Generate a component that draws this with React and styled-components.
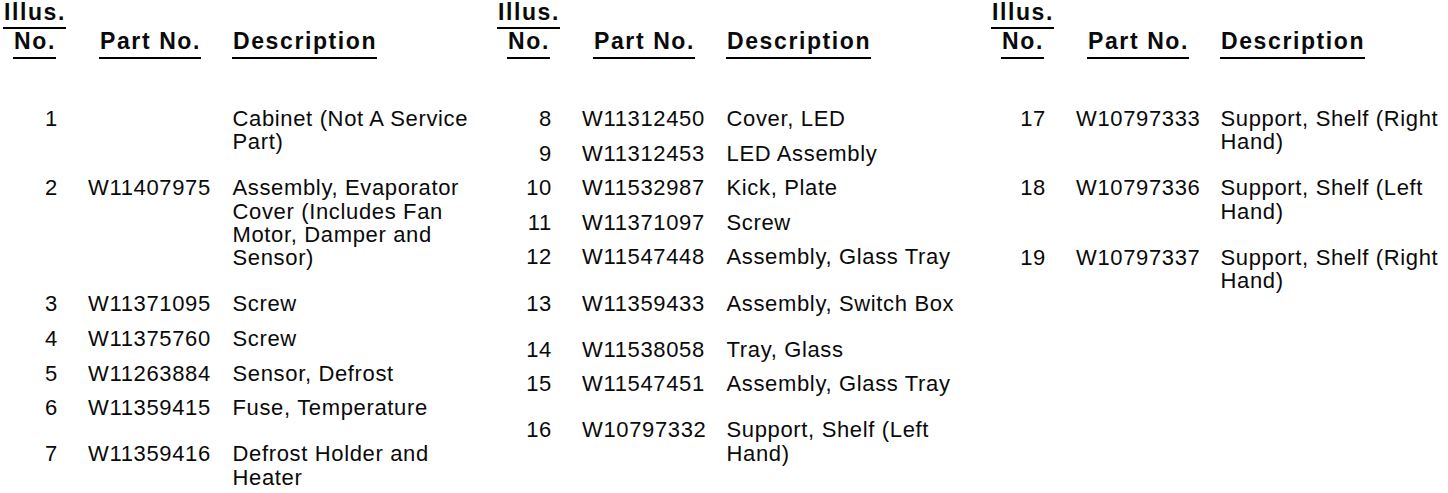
import React from 'react';
import styled, { createGlobalStyle } from 'styled-components';

const GlobalStyle = createGlobalStyle`
  html, body {
    margin: 0;
    padding: 0;
    background: #fff;
    overflow: hidden;
  }
  body {
    font-family: "Liberation Sans", Arial, sans-serif;
    color: #0a0a0a;
  }
`;

const Page = styled.div`
  display: grid;
  grid-template-columns: repeat(3, 494px);
  width: 1448px;
  height: 493px;
  overflow: hidden;
`;

const Panel = styled.section`
  display: flex;
  flex-direction: column;
`;

const HeadRow = styled.div`
  display: flex;
  align-items: flex-end;
  font-size: 23px;
  font-weight: 700;
  line-height: 1.1;
  letter-spacing: 1.6px;
`;

const HeadCell = styled.div`
  display: flex;
  flex-direction: column;
  align-items: ${p => (p.$center ? 'center' : 'flex-start')};
  width: ${p => p.$width}px;
  margin-left: ${p => p.$offset || 0}px;
`;

const Label = styled.span`
  display: inline-block;
  padding: 0 0 2px 1px;
  border-bottom: 2px solid #000;
`;

const List = styled.div`
  display: flex;
  flex-direction: column;
  padding-top: 48.5px;
`;

const Row = styled.div`
  display: grid;
  grid-template-columns: 58px 114.5px 254px;
  column-gap: 30px;
  align-items: start;
  margin-top: ${p => (p.$space === 'lg' ? 22.8 : p.$space === 'sm' ? 11.3 : 0)}px;
  font-size: 22px;
  line-height: 23.3px;
  letter-spacing: 0.65px;
`;

const Num = styled.div`
  text-align: right;
`;

const PartNo = styled.div`
  white-space: nowrap;
`;

const Desc = styled.div``;

const columns = [
  [
    { n: '1', part: '', desc: 'Cabinet (Not A Service Part)' },
    { n: '2', part: 'W11407975', desc: 'Assembly, Evaporator Cover (Includes Fan Motor, Damper and Sensor)', space: 'lg' },
    { n: '3', part: 'W11371095', desc: 'Screw', space: 'lg' },
    { n: '4', part: 'W11375760', desc: 'Screw', space: 'sm' },
    { n: '5', part: 'W11263884', desc: 'Sensor, Defrost', space: 'sm' },
    { n: '6', part: 'W11359415', desc: 'Fuse, Temperature', space: 'sm' },
    { n: '7', part: 'W11359416', desc: 'Defrost Holder and Heater', space: 'lg' },
  ],
  [
    { n: '8', part: 'W11312450', desc: 'Cover, LED' },
    { n: '9', part: 'W11312453', desc: 'LED Assembly', space: 'sm' },
    { n: '10', part: 'W11532987', desc: 'Kick, Plate', space: 'sm' },
    { n: '11', part: 'W11371097', desc: 'Screw', space: 'sm' },
    { n: '12', part: 'W11547448', desc: 'Assembly, Glass Tray', space: 'sm' },
    { n: '13', part: 'W11359433', desc: 'Assembly, Switch Box', space: 'lg' },
    { n: '14', part: 'W11538058', desc: 'Tray, Glass', space: 'lg' },
    { n: '15', part: 'W11547451', desc: 'Assembly, Glass Tray', space: 'sm' },
    { n: '16', part: 'W10797332', desc: 'Support, Shelf (Left Hand)', space: 'lg' },
  ],
  [
    { n: '17', part: 'W10797333', desc: 'Support, Shelf (Right Hand)' },
    { n: '18', part: 'W10797336', desc: 'Support, Shelf (Left Hand)', space: 'lg' },
    { n: '19', part: 'W10797337', desc: 'Support, Shelf (Right Hand)', space: 'lg' },
  ],
];

function PartsColumn({ rows }) {
  return (
    <Panel>
      <HeadRow>
        <HeadCell $width={69} $center>
          <Label>Illus.</Label>
          <Label>No.</Label>
        </HeadCell>
        <HeadCell $width={133} $offset={30}>
          <Label>Part No.</Label>
        </HeadCell>
        <HeadCell $width={200}>
          <Label>Description</Label>
        </HeadCell>
      </HeadRow>
      <List>
        {rows.map(r => (
          <Row key={r.n} $space={r.space}>
            <Num>{r.n}</Num>
            <PartNo>{r.part}</PartNo>
            <Desc>{r.desc}</Desc>
          </Row>
        ))}
      </List>
    </Panel>
  );
}

export default function App() {
  return (
    <>
      <GlobalStyle />
      <Page>
        {columns.map((rows, i) => (
          <PartsColumn key={i} rows={rows} />
        ))}
      </Page>
    </>
  );
}
